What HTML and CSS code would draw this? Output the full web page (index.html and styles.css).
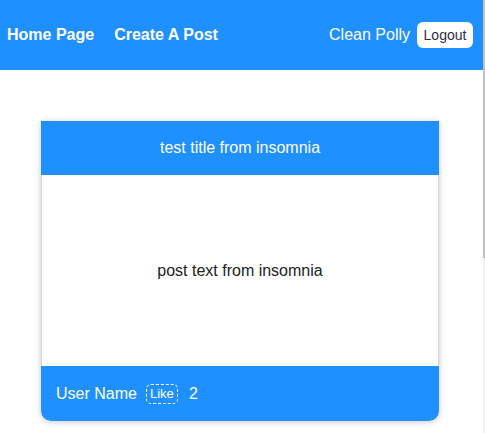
FILE: index.html
```html
<!DOCTYPE html>
<html>
<head>
<meta charset="utf-8">
<link rel="stylesheet" href="styles.css">
</head>
<body>
<nav class="navbar">
  <div class="nav-left">
    <a class="nav-link" href="#">Home Page</a>
    <a class="nav-link" href="#">Create A Post</a>
  </div>
  <div class="nav-right">
    <span class="nav-user">Clean Polly</span>
    <button class="logout">Logout</button>
  </div>
</nav>
<main class="posts">
  <article class="card">
    <header class="card-head">test title from insomnia</header>
    <div class="card-body">post text from insomnia</div>
    <footer class="card-foot">
      <span class="author">User Name</span>
      <button class="like">Like</button>
      <span class="count">2</span>
    </footer>
  </article>
</main>
<div class="scrollbar"><div class="scroll-thumb"></div></div>
</body>
</html>
```
FILE: styles.css
```css
html, body {
  margin: 0;
  padding: 0;
}
body {
  font-family: "Liberation Sans", Arial, sans-serif;
  background: #ffffff;
  color: #222;
  padding-right: 2px;
}
.scrollbar {
  position: fixed;
  top: 0;
  right: 0;
  width: 2px;
  height: 100%;
  background: #f1f1f1;
}
.scroll-thumb {
  height: 258px;
  background: #c1c1c1;
}
.navbar {
  height: 70px;
  background: #1e90ff;
  display: flex;
  align-items: center;
  justify-content: space-between;
  padding: 0 10px 0 7px;
}
.nav-left {
  display: flex;
  gap: 20px;
}
.nav-link {
  color: #fff;
  font-weight: bold;
  font-size: 16px;
  text-decoration: none;
}
.nav-right {
  display: flex;
  align-items: center;
  gap: 7px;
}
.nav-user {
  color: #fff;
  font-size: 16px;
}
.logout {
  background: #fff;
  border: none;
  border-radius: 6px;
  height: 26px;
  width: 56px;
  padding: 0;
  font-family: "Liberation Sans", Arial, sans-serif;
  font-size: 14px;
  color: #2f2f45;
}
.posts {
  padding-top: 51px;
  padding-bottom: 12px;
  display: flex;
  justify-content: center;
}
.card {
  width: 398px;
  margin-left: -3px;
  border-radius: 0 0 10px 10px;
  box-shadow: 0 1px 6px rgba(0, 0, 0, 0.22);
  display: flex;
  flex-direction: column;
}
.card-head {
  height: 54px;
  background: #1e90ff;
  color: #fff;
  font-size: 16px;
  display: flex;
  align-items: center;
  justify-content: center;
}
.card-body {
  height: 191px;
  background: #fff;
  border-left: 1px solid #d4d4d4;
  border-right: 1px solid #d4d4d4;
  display: flex;
  align-items: center;
  justify-content: center;
  font-size: 16px;
  color: #222;
}
.card-foot {
  height: 55px;
  background: #1e90ff;
  border-radius: 0 0 10px 10px;
  display: flex;
  align-items: center;
  padding-left: 15px;
  color: #fff;
  font-size: 16px;
}
.author {
  margin-right: 9px;
}
.like {
  background: transparent;
  border: 1px dashed #fff;
  border-radius: 5px;
  color: #fff;
  font-family: "Liberation Sans", Arial, sans-serif;
  font-size: 13px;
  height: 20px;
  width: 32px;
  padding: 0;
  margin-right: 11px;
}
.count {
  font-size: 16px;
}
```
